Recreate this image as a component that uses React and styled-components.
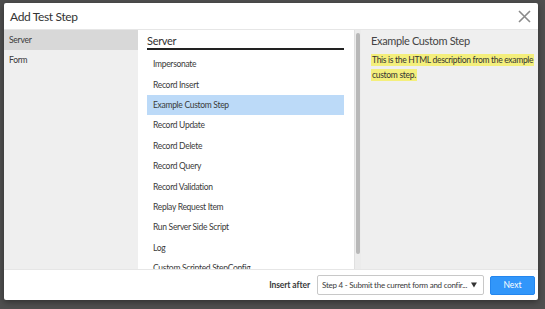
import React, { useState } from "react"
import styled, { createGlobalStyle } from "styled-components"

const Global = createGlobalStyle`
  html, body { margin: 0; padding: 0; }
  body {
    width: 545px;
    height: 309px;
    overflow: hidden;
    background: #4f4f4f;
    font-family: "Lato", "Open Sans", sans-serif;
  }
`

const Backdrop = styled.div`
  width: 545px;
  height: 309px;
  box-sizing: border-box;
  padding: 3px 7px 9px 4px;
  display: flex;
`

const Modal = styled.div`
  flex: 1;
  display: flex;
  flex-direction: column;
  background: #fff;
  border-radius: 2px;
  box-shadow: 0 2px 6px rgba(0, 0, 0, 0.4);
  overflow: hidden;
`

const Header = styled.div`
  height: 26px;
  flex-shrink: 0;
  display: flex;
  align-items: center;
  justify-content: space-between;
  padding: 0 6px 0 6px;
  border-bottom: 1px solid #e6e6e6;
`

const Title = styled.h1`
  margin: 0;
  font-size: 12px;
  letter-spacing: -0.35px;
  font-weight: 400;
  color: #333;
`

const Close = styled.button`
  border: 0;
  background: none;
  padding: 0;
  width: 16px;
  height: 16px;
  display: flex;
  align-items: center;
  justify-content: center;
  cursor: pointer;
`

const Body = styled.div`
  flex: 1;
  display: flex;
  min-height: 0;
`

const Sidebar = styled.div`
  width: 134px;
  flex-shrink: 0;
  background: #efefef;
  display: flex;
  flex-direction: column;
`

const Category = styled.div`
  height: 20px;
  display: flex;
  align-items: center;
  padding-left: 5px;
  font-size: 8.5px;
  letter-spacing: -0.25px;
  color: #3a3a3a;
  background: ${p => (p.active ? "#d8d8d8" : "transparent")};
`

const ListPane = styled.div`
  width: 216px;
  flex-shrink: 0;
  box-sizing: border-box;
  padding: 4px 10px 0 9px;
  overflow: hidden;
  display: flex;
  flex-direction: column;
`

const ListTitle = styled.div`
  font-size: 11px;
  letter-spacing: -0.3px;
  color: #333;
  padding-bottom: 1px;
  border-bottom: 2px solid #222;
  margin-bottom: 4px;
  line-height: 13px;
`

const Item = styled.div`
  height: 20.4px;
  flex-shrink: 0;
  display: flex;
  align-items: center;
  padding-left: 6px;
  font-size: 8.5px;
  letter-spacing: -0.3px;
  color: #3a3a3a;
  white-space: nowrap;
  background: ${p => (p.active ? "#bcdaf8" : "transparent")};
`

const Scroll = styled.div`
  width: 7px;
  flex-shrink: 0;
  box-sizing: border-box;
  background: #ececec;
  border-left: 1px solid #e0e0e0;
  padding: 3px 1px 0 1px;
  display: flex;
  flex-direction: column;
`

const Thumb = styled.div`
  height: 221px;
  border-radius: 3px;
  background: #b8b8b8;
`

const Detail = styled.div`
  flex: 1;
  min-width: 0;
  background: #efefef;
  padding: 4px 10px 0 10px;
`

const DetailTitle = styled.div`
  font-size: 11px;
  letter-spacing: -0.35px;
  color: #444;
  line-height: 13px;
  margin-bottom: 4px;
`

const Mark = styled.span`
  background: #f4ef7c;
  font-size: 8.5px;
  letter-spacing: -0.3px;
  color: #333;
  box-decoration-break: clone;
  -webkit-box-decoration-break: clone;
  padding: 1px 1px;
`

const Desc = styled.div`
  line-height: 11px;
  width: 164px;
`

const Footer = styled.div`
  height: 30px;
  flex-shrink: 0;
  display: flex;
  align-items: center;
  justify-content: flex-end;
  gap: 6px;
  padding-right: 3px;
  border-top: 1px solid #e6e6e6;
`

const Label = styled.span`
  font-size: 8.5px;
  font-weight: 700;
  letter-spacing: -0.1px;
  color: #3a3a3a;
  margin-right: 1px;
`

const Select = styled.div`
  width: 167px;
  height: 20px;
  box-sizing: border-box;
  border: 1px solid #c8c8c8;
  border-radius: 2px;
  display: flex;
  align-items: center;
  justify-content: space-between;
  gap: 4px;
  padding: 0 6px 0 4px;
  font-size: 8px;
  letter-spacing: -0.25px;
  color: #3a3a3a;
  white-space: nowrap;
  overflow: hidden;
`

const NextButton = styled.button`
  width: 45px;
  height: 19px;
  border: 1px solid #2486ee;
  border-radius: 2px;
  background: #3196fa;
  color: #fff;
  font-family: inherit;
  font-size: 8.5px;
  padding: 0;
`

const steps = [
  "Impersonate",
  "Record Insert",
  "Example Custom Step",
  "Record Update",
  "Record Delete",
  "Record Query",
  "Record Validation",
  "Replay Request Item",
  "Run Server Side Script",
  "Log",
  "Custom Scripted StepConfig",
]

export default function App() {
  const [category, setCategory] = useState("Server")
  const [step, setStep] = useState("Example Custom Step")

  return (
    <>
      <Global />
      <Backdrop>
        <Modal>
          <Header>
            <Title>Add Test Step</Title>
            <Close aria-label="Close">
              <svg width="13" height="13" viewBox="0 0 13 13">
                <path d="M1 1L12 12M12 1L1 12" stroke="#8a8a8a" strokeWidth="1.6" />
              </svg>
            </Close>
          </Header>
          <Body>
            <Sidebar>
              {["Server", "Form"].map(c => (
                <Category key={c} active={c === category} onClick={() => setCategory(c)}>
                  {c}
                </Category>
              ))}
            </Sidebar>
            <ListPane>
              <ListTitle>Server</ListTitle>
              {steps.map(s => (
                <Item key={s} active={s === step} onClick={() => setStep(s)}>
                  {s}
                </Item>
              ))}
            </ListPane>
            <Scroll>
              <Thumb />
            </Scroll>
            <Detail>
              <DetailTitle>Example Custom Step</DetailTitle>
              <Desc>
                <Mark>This is the HTML description from the example custom step.</Mark>
              </Desc>
            </Detail>
          </Body>
          <Footer>
            <Label>Insert after</Label>
            <Select>
              <span>Step 4 - Submit the current form and confir...</span>
              <svg width="7" height="6" viewBox="0 0 7 6">
                <path d="M0 0H7L3.5 6Z" fill="#333" />
              </svg>
            </Select>
            <NextButton>Next</NextButton>
          </Footer>
        </Modal>
      </Backdrop>
    </>
  )
}
